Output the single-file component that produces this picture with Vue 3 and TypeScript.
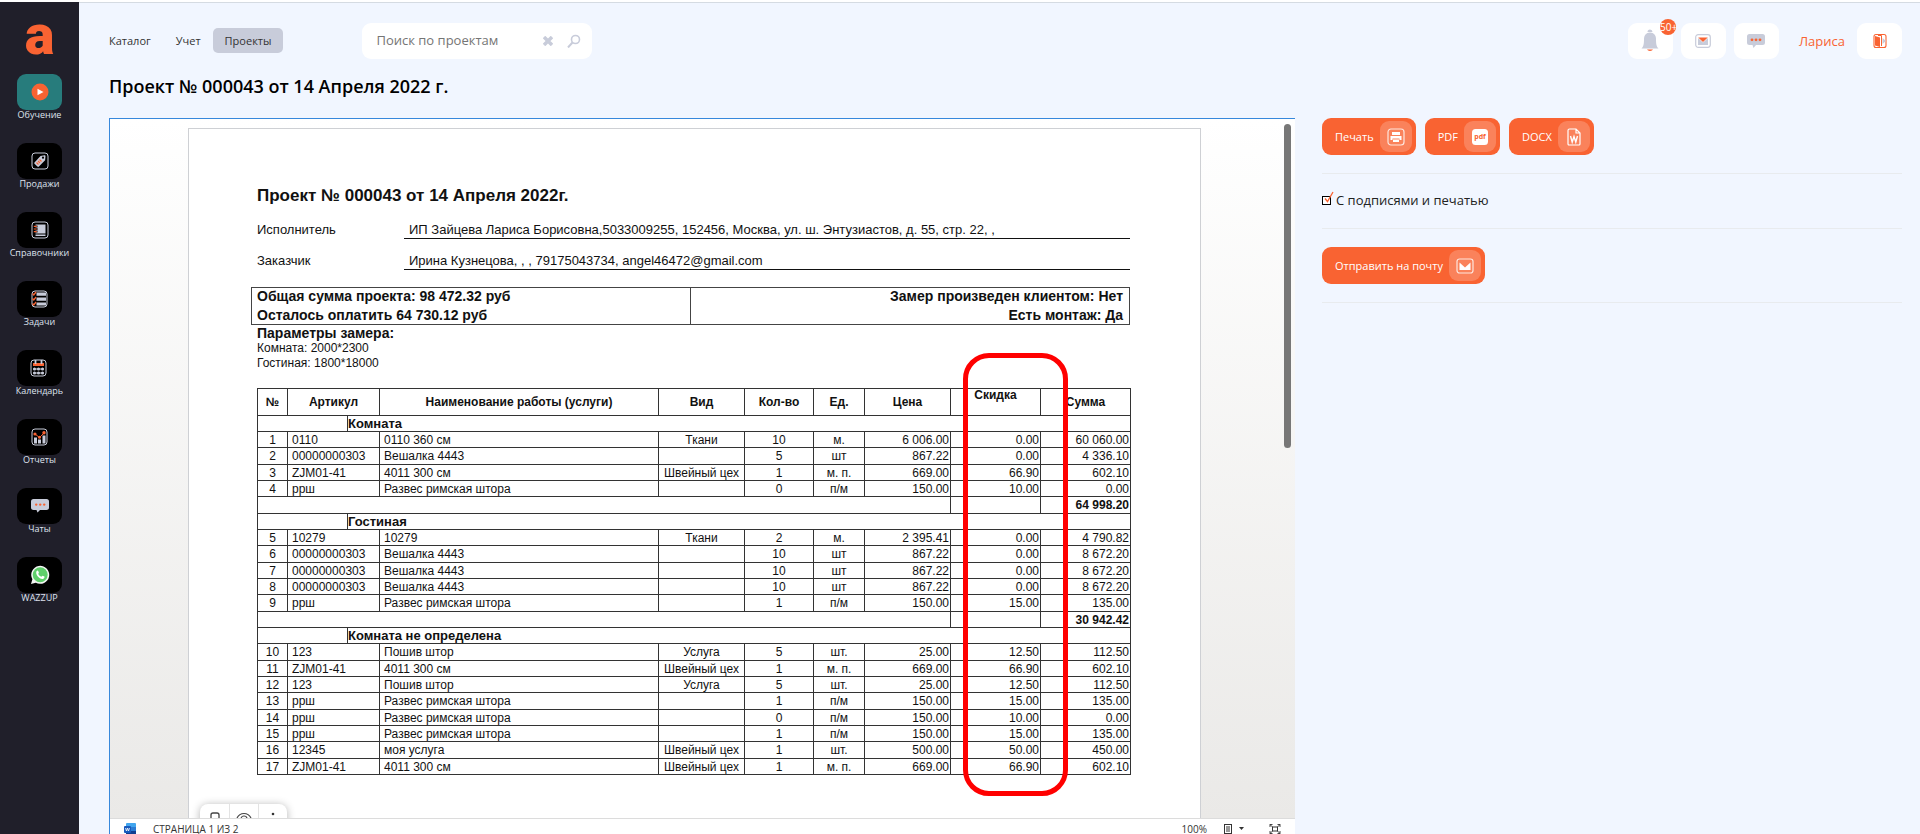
<script setup lang="ts">
import { ref } from 'vue'

interface MenuItem { id: string; label: string; active?: boolean }
interface Item {
  no: number; code: string; name: string; kind: string; qty: number
  unit: string; price: string; discount: string; sum: string
}
interface Section { title: string; items: Item[]; total?: string }

const menu: MenuItem[] = [
  { id: 'learn', label: 'Обучение', active: true },
  { id: 'sales', label: 'Продажи' },
  { id: 'refs', label: 'Справочники' },
  { id: 'tasks', label: 'Задачи' },
  { id: 'calendar', label: 'Календарь' },
  { id: 'reports', label: 'Отчеты' },
  { id: 'chats', label: 'Чаты' },
  { id: 'wazzup', label: 'WAZZUP' },
]

const row = (no: number, code: string, name: string, kind: string, qty: number,
  unit: string, price: string, discount: string, sum: string): Item =>
  ({ no, code, name, kind, qty, unit, price, discount, sum })

const sections: Section[] = [
  {
    title: 'Комната',
    total: '64 998.20',
    items: [
      row(1, '0110', '0110 360 см', 'Ткани', 10, 'м.', '6 006.00', '0.00', '60 060.00'),
      row(2, '00000000303', 'Вешалка 4443', '', 5, 'шт', '867.22', '0.00', '4 336.10'),
      row(3, 'ZJM01-41', '4011 300 см', 'Швейный цех', 1, 'м. п.', '669.00', '66.90', '602.10'),
      row(4, 'ррш', 'Развес римская штора', '', 0, 'п/м', '150.00', '10.00', '0.00'),
    ],
  },
  {
    title: 'Гостиная',
    total: '30 942.42',
    items: [
      row(5, '10279', '10279', 'Ткани', 2, 'м.', '2 395.41', '0.00', '4 790.82'),
      row(6, '00000000303', 'Вешалка 4443', '', 10, 'шт', '867.22', '0.00', '8 672.20'),
      row(7, '00000000303', 'Вешалка 4443', '', 10, 'шт', '867.22', '0.00', '8 672.20'),
      row(8, '00000000303', 'Вешалка 4443', '', 10, 'шт', '867.22', '0.00', '8 672.20'),
      row(9, 'ррш', 'Развес римская штора', '', 1, 'п/м', '150.00', '15.00', '135.00'),
    ],
  },
  {
    title: 'Комната не определена',
    items: [
      row(10, '123', 'Пошив штор', 'Услуга', 5, 'шт.', '25.00', '12.50', '112.50'),
      row(11, 'ZJM01-41', '4011 300 см', 'Швейный цех', 1, 'м. п.', '669.00', '66.90', '602.10'),
      row(12, '123', 'Пошив штор', 'Услуга', 5, 'шт.', '25.00', '12.50', '112.50'),
      row(13, 'ррш', 'Развес римская штора', '', 1, 'п/м', '150.00', '15.00', '135.00'),
      row(14, 'ррш', 'Развес римская штора', '', 0, 'п/м', '150.00', '10.00', '0.00'),
      row(15, 'ррш', 'Развес римская штора', '', 1, 'п/м', '150.00', '15.00', '135.00'),
      row(16, '12345', 'моя услуга', 'Швейный цех', 1, 'шт.', '500.00', '50.00', '450.00'),
      row(17, 'ZJM01-41', '4011 300 см', 'Швейный цех', 1, 'м. п.', '669.00', '66.90', '602.10'),
    ],
  },
]

const query = ref('')
const signed = ref(true)
</script>

<template>
  <div class="app">
    <aside class="sidebar">
      <a class="logo" href="#" aria-label="На главную">a</a>
      <nav class="menu">
        <a v-for="m in menu" :key="m.id" href="#" class="menu-item">
          <span class="tile" :class="{ active: m.active }">
            <svg v-if="m.id === 'learn'" width="18" height="18" viewBox="0 0 18 18">
              <circle cx="9" cy="9" r="8.5" fill="#f96332" /><path d="M6.5 5.8v6.4l6-3.2z" fill="#fff" />
            </svg>
            <svg v-else-if="m.id === 'sales'" width="18" height="18" viewBox="0 0 18 18">
              <rect x="1" y="1" width="16" height="16" rx="3" fill="none" stroke="#c8ccda" />
              <path d="M3.5 10.5 9.5 4l4-.8c.6 0 1 .4 1 1l-.4 4-6.2 6.3c-.5.5-1 .5-1.500 0l-2.900-2.800c-.4-.4-.4-.8 0-1.200z" fill="#c8ccda" />
              <circle cx="12" cy="5.700" r="1.100" fill="#000" />
              <path d="m5.500 10.500 2 2m-.5-3.500 2 2m-.5-3.500 2 2" stroke="#f96332" stroke-width="1.100" />
            </svg>
            <svg v-else-if="m.id === 'refs'" width="18" height="18" viewBox="0 0 18 18">
              <rect x="1" y="1" width="16" height="16" rx="3" fill="none" stroke="#c8ccda" />
              <path d="M4.500 3.500h10v9h-10zM4.500 13.500h10v1.500h-10z" fill="#c8ccda" />
              <path d="M3 5.500h3.500M3 8h3.500M3 10.500h3.500" stroke="#000" stroke-width="2" />
              <path d="M2.800 5.300h3M2.800 8h3M2.800 10.700h3" stroke="#f96332" stroke-width="1.200" />
            </svg>
            <svg v-else-if="m.id === 'tasks'" width="18" height="18" viewBox="0 0 18 18">
              <rect x="1" y="1" width="15" height="16" rx="3" fill="none" stroke="#c8ccda" />
              <path d="M5.500 2.500H15v3.200H5.500zM5.500 7.500H15v3.200H5.500zM5.500 12.400H15v3.200H5.500z" fill="#c8ccda" />
              <path d="m1.500 3.500 1.300 1.500 2.200-3m-3.500 6.500 1.300 1.500 2.200-3m-3.500 6.500 1.300 1.500 2.200-3" fill="none" stroke="#f96332" stroke-width="1.300" />
            </svg>
            <svg v-else-if="m.id === 'calendar'" width="18" height="18" viewBox="0 0 18 18">
              <rect x="1" y="1" width="15" height="16" rx="3" fill="none" stroke="#c8ccda" />
              <path d="M3 4h11v3H3z" fill="#f96332" />
              <path d="M5.500 1v4M11.500 1v4" stroke="#c8ccda" stroke-width="1.800" />
              <path d="M3 10h11M3 14h11" stroke="#c8ccda" stroke-width="1" />
              <g fill="#c8ccda"><circle cx="4.500" cy="10" r="1.500" /><circle cx="8.500" cy="10" r="1.500" /><circle cx="12.500" cy="10" r="1.500" /><circle cx="4.500" cy="14" r="1.500" /><circle cx="8.500" cy="14" r="1.500" /><circle cx="12.500" cy="14" r="1.500" /></g>
            </svg>
            <svg v-else-if="m.id === 'reports'" width="18" height="18" viewBox="0 0 18 18">
              <rect x="1" y="1" width="15" height="16" rx="3" fill="none" stroke="#c8ccda" />
              <path d="M3 9.500h3v6H3zM7 11.500h3v4H7zM11.500 7.500h3v8h-3z" fill="#c8ccda" />
              <path d="m4 6 4.500 3.500L13 5" fill="none" stroke="#f96332" />
              <circle cx="4" cy="6" r="1.600" fill="#f96332" /><circle cx="8.500" cy="9.300" r="1.500" fill="#f96332" /><circle cx="13" cy="4.700" r="1.700" fill="#f96332" />
            </svg>
            <svg v-else-if="m.id === 'chats'" width="18" height="18" viewBox="0 0 18 18">
              <path d="M2.500 2h13A2.500 2.500 0 0 1 18 4.500v6a2.500 2.500 0 0 1-2.500 2.500H9l-2.500 2.500L5.500 13h-3A2.500 2.500 0 0 1 0 10.500v-6A2.500 2.500 0 0 1 2.500 2z" fill="#c8ccda" />
              <g fill="#f96332"><circle cx="5.200" cy="7.600" r="1.200" /><circle cx="9.200" cy="7.600" r="1.200" /><circle cx="13.200" cy="7.600" r="1.200" /></g>
            </svg>
            <svg v-else width="20" height="20" viewBox="0 0 20 20">
              <path d="M1 19l1.400-4.700A9 9 0 1 1 5.800 17.700z" fill="#f4f6f4" />
              <circle cx="10.200" cy="9.800" r="7.500" fill="#5fcf6b" />
              <path d="M6.500 6.200c.7-1 1.400-.9 1.700-.2l.7 1.600c.1.400-.7 1.200-.6 1.400.7 1.400 1.700 2.200 3 2.700.4.100 1-1.200 1.400-1l1.700.9c.5.300-.1 1.800-1 2.200-3.400 1.200-8.500-4.200-6.900-7.600z" fill="#fff" />
            </svg>
          </span>
          <span class="menu-label">{{ m.label }}</span>
        </a>
      </nav>
    </aside>

    <main class="main">
      <header class="topbar">
        <nav class="tabs">
          <a href="#">Каталог</a>
          <a href="#">Учет</a>
          <a href="#" class="current">Проекты</a>
        </nav>
        <form class="search" @submit.prevent>
          <input v-model="query" type="text" placeholder="Поиск по проектам" aria-label="Поиск по проектам">
          <button type="button" aria-label="Очистить" @click="query = ''">
            <svg width="10" height="10" viewBox="0 0 10 10"><path d="m1 1 8 8M9 1 1 9" stroke="#c8ccda" stroke-width="3.500" /></svg>
          </button>
          <button type="submit" aria-label="Найти">
            <svg width="14" height="14" viewBox="0 0 14 14" fill="none" stroke="#c8ccda"><circle cx="8.500" cy="5.500" r="4" stroke-width="1.600" /><path d="m5.500 8.500-4.500 5" stroke-width="2" /></svg>
          </button>
        </form>
        <div class="actions">
          <button type="button" aria-label="Уведомления" class="bell">
            <svg width="18" height="24" viewBox="0 0 18 24">
              <path d="M6.500 3a2.500 2.500 0 0 1 5 0z" fill="#c8ccda" />
              <path d="M9 3.500c4 0 6 3 6 6.500 0 5 .5 7.500 2.500 9.500H.5C2.500 17.500 3 15 3 10c0-3.500 2-6.500 6-6.500z" fill="#c8ccda" />
              <path d="M6 20.500h6a3.200 2.200 0 0 1-6 0z" fill="#f96332" />
            </svg>
            <span class="badge">50+</span>
          </button>
          <button type="button" aria-label="Почта">
            <svg width="16" height="14" viewBox="0 0 16 14"><rect x=".7" y=".7" width="14.600" height="12.600" rx="2.500" fill="none" stroke="#c8ccda" stroke-width="1.200" /><path d="M3 4v7h10V4L8 8.500z" fill="#c8ccda" /><path d="M3.200 3.500h9.600L8 8z" fill="#f96332" /></svg>
          </button>
          <button type="button" aria-label="Чат">
            <svg width="18" height="16" viewBox="0 0 18 16"><path d="M2.500 1h13A2.500 2.500 0 0 1 18 3.500v6a2.500 2.500 0 0 1-2.500 2.500H9l-2.500 3-1-3h-3A2.500 2.500 0 0 1 0 9.500v-6A2.500 2.500 0 0 1 2.500 1z" fill="#c8ccda" /><g fill="#f96332"><circle cx="5" cy="6.800" r="1.400" /><circle cx="9" cy="6.800" r="1.400" /><circle cx="13" cy="6.800" r="1.400" /></g></svg>
          </button>
          <a href="#" class="user">Лариса</a>
          <button type="button" aria-label="Выход">
            <svg width="14" height="16" viewBox="0 0 14 16"><rect x="1" y="1.500" width="12" height="13" rx="2" fill="none" stroke="#f96332" stroke-width="1.100" /><path d="M2 3l5 1.500V14l-5-1.500z" fill="#f96332" /><path d="M5 2.500h3.500V13" fill="none" stroke="#f96332" /><path d="M9.500 5 13 8l-3.500 3z" fill="#c8ccda" /></svg>
          </button>
        </div>
      </header>

      <h1 class="title">Проект № 000043 от 14 Апреля 2022 г.</h1>

      <div class="content">
        <section class="viewer">
          <div class="canvas">
            <article class="paper">
              <h2>Проект № 000043 от 14 Апреля 2022г.</h2>
              <dl class="parties">
                <dt>Исполнитель</dt>
                <dd>ИП Зайцева Лариса Борисовна,5033009255, 152456, Москва, ул. ш. Энтузиастов, д. 55, стр. 22, ,</dd>
                <dt>Заказчик</dt>
                <dd>Ирина Кузнецова, , , 79175043734, angel46472@gmail.com</dd>
              </dl>
              <div class="summary">
                <div><p>Общая сумма проекта: 98 472.32 руб</p><p>Осталось оплатить 64 730.12 руб</p></div>
                <div class="right"><p>Замер произведен клиентом: Нет</p><p>Есть монтаж: Да</p></div>
              </div>
              <h3>Параметры замера:</h3>
              <p class="param">Комната: 2000*2300</p>
              <p class="param">Гостиная: 1800*18000</p>

              <div class="estimate">
                <table>
                  <colgroup>
                    <col class="c-no"><col class="c-code1"><col class="c-code2"><col class="c-name"><col class="c-kind">
                    <col class="c-qty"><col class="c-unit"><col class="c-kind"><col class="c-sum"><col class="c-sum">
                  </colgroup>
                  <thead>
                    <tr>
                      <th>№</th><th colspan="2">Артикул</th><th>Наименование работы (услуги)</th><th>Вид</th>
                      <th>Кол-во</th><th>Ед.</th><th>Цена</th><th class="raised">Скидка</th><th>Сумма</th>
                    </tr>
                  </thead>
                  <tbody>
                    <template v-for="s in sections" :key="s.title">
                      <tr><td colspan="2"></td><td colspan="8" class="section">{{ s.title }}</td></tr>
                      <tr v-for="i in s.items" :key="i.no">
                        <td class="mid">{{ i.no }}</td>
                        <td colspan="2" class="txt">{{ i.code }}</td>
                        <td class="txt">{{ i.name }}</td>
                        <td class="mid">{{ i.kind }}</td>
                        <td class="mid">{{ i.qty }}</td>
                        <td class="mid">{{ i.unit }}</td>
                        <td class="num">{{ i.price }}</td>
                        <td class="num">{{ i.discount }}</td>
                        <td class="num">{{ i.sum }}</td>
                      </tr>
                      <tr v-if="s.total">
                        <td colspan="8"></td><td></td><td class="num total">{{ s.total }}</td>
                      </tr>
                    </template>
                  </tbody>
                </table>
                <div class="marker"></div>
              </div>
            </article>
            <div class="thumb"></div>
            <div class="float-tools">
              <button type="button" aria-label="Закладка"><svg width="10" height="16" viewBox="0 0 10 16"><path d="M1 16V3a2 2 0 0 1 2-2h4a2 2 0 0 1 2 2v13" fill="none" stroke="#444" stroke-width="1.300" /></svg></button>
              <button type="button" aria-label="Просмотр"><svg width="16" height="16" viewBox="0 0 16 16" fill="none" stroke="#444" stroke-width="1.200"><path d="M1 6c3-6 11-6 14 0" /><circle cx="8" cy="7" r="3" /></svg></button>
              <button type="button" aria-label="Ещё"><svg width="4" height="16" viewBox="0 0 4 16" fill="#333"><circle cx="2" cy="2" r="1.300" /><circle cx="2" cy="8" r="1.300" /><circle cx="2" cy="14" r="1.300" /></svg></button>
            </div>
          </div>
          <footer class="status">
            <svg width="12" height="12" viewBox="0 0 12 12"><rect x="2" width="10" height="12" rx="1" fill="#41a5ee" /><path d="M2 4h10v4H2z" fill="#2b7cd3" /><path d="M2 8h10v4H2z" fill="#103f91" /><rect y="3" width="7" height="7" rx="1" fill="#185abd" /><path d="m1.500 5 1 3 1-3 1 3 1-3" fill="none" stroke="#fff" stroke-width=".8" /></svg>
            <span class="pages">СТРАНИЦА 1 ИЗ 2</span>
            <span class="zoom">100%</span>
            <button type="button" class="layout" aria-label="Режим просмотра">
              <svg width="8" height="10" viewBox="0 0 8 10"><rect x=".5" y=".5" width="7" height="9" fill="none" stroke="#333" /><path d="M2 3h4M2 5h4M2 7h4" stroke="#333" /></svg>
              <svg width="5" height="3" viewBox="0 0 5 3"><path d="M0 0h5L2.500 3z" fill="#333" /></svg>
            </button>
            <button type="button" aria-label="По размеру окна">
              <svg width="12" height="10" viewBox="0 0 12 10" fill="none" stroke="#333"><rect x="3.500" y="3" width="5" height="4" /><path d="M1 3V.5h2.500M8.500.5H11V3M11 7v2.500H8.500M3.500 9.500H1V7M1 .5 3.500 3M11 .5 8.500 3M11 9.500 8.500 7M1 9.500 3.500 7" stroke-width=".9" /></svg>
            </button>
          </footer>
        </section>

        <section class="panel">
          <div class="group">
            <button type="button" class="btn">Печать
              <span class="ico"><svg width="18" height="18" viewBox="0 0 18 18"><rect x="1" y="1" width="16" height="16" rx="3" fill="none" stroke="#fff" stroke-opacity=".8" stroke-width="1.200" /><path d="M5 4h8v3H5zM3.500 8h11v4h-2v-1.500h-7V12h-2zM6 11.500h6V14H6z" fill="#fff" /></svg></span>
            </button>
            <button type="button" class="btn">PDF
              <span class="ico"><svg width="18" height="18" viewBox="0 0 18 18"><rect x="1" y="1" width="16" height="16" rx="3.500" fill="#fff" /><text x="9" y="11" text-anchor="middle" font-family="Open Sans, sans-serif" font-weight="700" font-size="7" fill="#f96332">pdf</text></svg></span>
            </button>
            <button type="button" class="btn">DOCX
              <span class="ico"><svg width="14" height="18" viewBox="0 0 14 18" fill="none" stroke="#fff" stroke-width="1.200"><path d="M1 2.500A1.500 1.500 0 0 1 2.500 1H9l4 4v11a1 1 0 0 1-1 1H2a1 1 0 0 1-1-1zM9 1v4h4" /><path d="m3.500 8 1.700 6L7 8.500 8.800 14l1.700-6" stroke-width="1.400" /></svg></span>
            </button>
          </div>
          <div class="group">
            <label class="check">
              <span class="box">
                <input v-model="signed" type="checkbox">
                <svg v-if="signed" width="12" height="14" viewBox="0 0 12 14" fill="none" stroke="#f96332"><path d="m3 7.500 2.500 3L11 1" stroke-width="1.300" /></svg>
              </span>
              С подписями и печатью
            </label>
          </div>
          <div class="group">
            <button type="button" class="btn">Отправить на почту
              <span class="ico"><svg width="18" height="16" viewBox="0 0 18 16"><rect x="1" y="1" width="16" height="14" rx="2.500" fill="none" stroke="#fff" stroke-opacity=".8" stroke-width="1.200" /><path d="M3.500 4.500V12h11V4.500L9 9.500z" fill="#fff" /></svg></span>
            </button>
          </div>
        </section>
      </div>
    </main>
  </div>
</template>

<style>
body { margin: 0; background: #f1f6ff; }
</style>

<style scoped>
* { box-sizing: border-box; }
.app {
  display: flex;
  height: 100vh;
  overflow: hidden;
  border-top: 2px solid #fff;
  background: #f1f6ff;
  font-family: "Open Sans", "Noto Sans", sans-serif;
  color: #222;
}
button { border: 0; padding: 0; background: none; font: inherit; color: inherit; cursor: pointer; }
a { color: inherit; text-decoration: none; }
h1, h2, h3, p, dl, dd { margin: 0; }
svg { display: block; flex: none; }

.sidebar { width: 79px; flex: none; background: #201f2a; }
.logo {
  display: block;
  height: 72px;
  text-align: center;
  font: 900 56px/66px Roboto, sans-serif;
  color: #f96332;
}
.menu { display: flex; flex-direction: column; align-items: center; gap: 20px; }
.menu-item { display: flex; flex-direction: column; align-items: center; height: 49px; }
.tile { display: flex; align-items: center; justify-content: center; width: 45px; height: 36px; border-radius: 9px; background: #000; }
.tile.active { background: #277c7c; }
.menu-label { font-size: 9px; line-height: 10px; color: #dfe3ee; white-space: nowrap; }

.main { flex: 1; min-width: 0; display: flex; flex-direction: column; border-top: 1px solid #d5dbe2; padding-left: 30px; }
.topbar { display: flex; align-items: center; height: 36px; margin-top: 20px; padding-right: 18px; }
.tabs { display: flex; align-items: center; padding-bottom: 1px; font-size: 11px; line-height: 25px; color: #333; }
.tabs a { margin-right: 25px; }
.tabs .current { margin: 0 0 0 -13px; padding: 0 12px; border-radius: 5px; background: #c8ccda; }
.search { display: flex; align-items: center; width: 230px; height: 36px; margin-left: 79px; padding: 0 11px 0 14px; border-radius: 9px; background: #fff; }
.search input { flex: 1; min-width: 0; border: 0; padding: 0 0 2px; outline: 0; background: none; font: 13px/18px "Open Sans", sans-serif; color: #333; }
.search input::placeholder { color: #757575; }
.search button + button { margin-left: 14px; }
.actions { display: flex; align-items: center; gap: 8px; margin-left: auto; }
.actions button { position: relative; display: flex; align-items: center; justify-content: center; width: 45px; height: 36px; border-radius: 9px; background: #fff; }
.badge { position: absolute; top: -4px; right: -3px; width: 16px; height: 16px; border-radius: 8px; overflow: hidden; background: #f96332; color: #fff; font-size: 10px; line-height: 16px; text-align: left; }
.user { margin: 0 4px 0 12px; padding-bottom: 1px; font-size: 13px; color: #f96332; }

.title { margin-top: 13px; height: 46px; font-size: 18px; line-height: 28px; font-weight: 600; color: #000; }
.content { flex: 1; min-height: 0; display: grid; grid-template-columns: 1186fr 598fr; grid-template-rows: 100%; column-gap: 27px; }

.viewer { display: flex; flex-direction: column; min-width: 0; margin-bottom: -4px; border: solid #3788dc; border-width: 1px 0 0 1px; background: #fff; }
.canvas { position: relative; flex: 1; min-height: 0; overflow: hidden; padding: 9px 94px 0 78px; background: linear-gradient(#fff, #eae9e7); }
.paper {
  min-height: 1200px;
  border: 1px solid #ced0d4;
  padding: 55px 70px 0 68px;
  background: #fff;
  font-family: "Liberation Sans", Arial, sans-serif;
  color: #111;
}
.paper h2 { font-size: 17px; line-height: 24px; font-weight: 700; }
.parties { display: grid; grid-template-columns: 147px 1fr; row-gap: 14px; margin-top: 14px; font-size: 13px; line-height: 16px; }
.parties dd { border-bottom: 1px solid #111; padding-left: 5px; white-space: nowrap; }
.parties dt { white-space: nowrap; }
.summary { display: grid; grid-template-columns: 439fr 440fr; margin: 17px 0 0 -6px; border: 1px solid #444; font-size: 14px; line-height: 16px; font-weight: 700; }
.summary > div { display: grid; row-gap: 3px; padding: 0 6px 1px 5px; }
.summary .right { border-left: 1px solid #444; text-align: right; }
h3 { font-size: 14px; line-height: 16px; }
.param { font-size: 12px; line-height: 15px; }

.estimate { position: relative; margin-top: 17px; }
table { width: 100%; table-layout: fixed; border-collapse: collapse; font-size: 12px; line-height: 12px; }
.c-no { width: 30px; }
.c-code1 { width: 60px; }
.c-code2 { width: 32px; }
.c-name { width: 279px; }
.c-kind { width: 86px; }
.c-qty { width: 69px; }
.c-unit { width: 51px; }
.c-sum { width: 90px; }
td, th { border: 1px solid #333; padding: 0 1px; white-space: nowrap; }
thead tr { height: 27px; }
tbody tr { height: 16px; }
tbody tr:nth-child(3n) { height: 17px; }
th { font-weight: 700; }
.raised { vertical-align: top; }
.section { font-size: 13px; font-weight: 700; padding: 0; }
.mid { text-align: center; }
.txt { padding-left: 4px; }
.num { text-align: right; }
.total { font-weight: 700; }
.marker { position: absolute; top: -35px; right: 62px; bottom: -21px; width: 105px; border: 5px solid #f00; border-radius: 26px; pointer-events: none; }

.thumb { position: absolute; top: 5px; right: 4px; width: 7px; height: 324px; border-radius: 4px; background: #777; }
.float-tools { position: absolute; left: 90px; bottom: -22px; display: flex; height: 36px; border-radius: 8px; background: #fff; box-shadow: 0 1px 8px rgba(0, 0, 0, .3); }
.float-tools button { display: flex; justify-content: center; width: 29px; padding-top: 8px; }
.float-tools button + button { border-left: 1px solid #e3e3e3; }
.status { display: flex; align-items: center; flex: none; height: 20px; border-top: 1px solid #dcdcdc; padding: 0 14px; font-size: 10px; line-height: 10px; color: #333; }
.pages { margin-left: 17px; }
.zoom { margin-left: auto; }
.status .layout { display: flex; align-items: center; gap: 7px; margin: 0 25px 0 17px; }

.panel { min-width: 0; padding-right: 18px; }
.group { display: flex; gap: 9px; padding-bottom: 18px; margin-bottom: 18px; border-bottom: 1px solid #e8ebee; }
.btn { display: flex; align-items: center; gap: 6px; height: 37px; padding: 0 4px 0 13px; border-radius: 9px; background: #f96332; color: #fff; font-size: 11px; font-weight: 500; white-space: nowrap; }
.ico { display: flex; align-items: center; justify-content: center; width: 32px; height: 31px; border-radius: 9px; background: rgba(255, 255, 255, .2); }
.check { display: flex; align-items: center; gap: 5px; height: 18px; padding-bottom: 2px; font-size: 13px; color: #222; }
.box { position: relative; display: flex; }
.box input { appearance: none; width: 9px; height: 9px; margin: 0; border: 1px solid #000; background: #fff; }
.box svg { position: absolute; left: 0; bottom: 0; pointer-events: none; }
</style>
